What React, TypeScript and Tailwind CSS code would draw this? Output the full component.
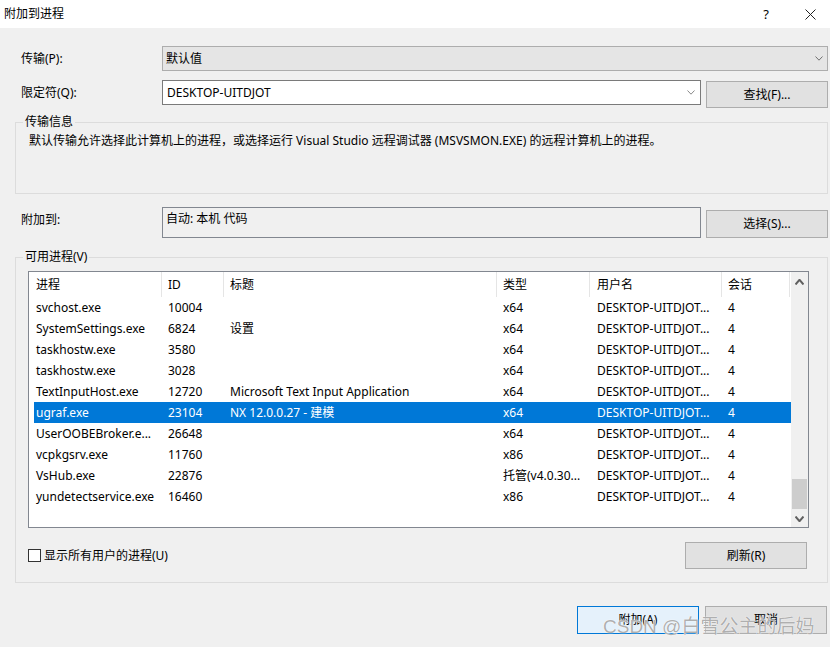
import React from "react";

const font = { fontFamily: '"Segoe UI", "Noto Sans", "Noto Sans CJK SC", sans-serif' };

type Row = [string, string, string, string, string, string];

const rows: Row[] = [
  ["svchost.exe", "10004", "", "x64", "DESKTOP-UITDJOT...", "4"],
  ["SystemSettings.exe", "6824", "设置", "x64", "DESKTOP-UITDJOT...", "4"],
  ["taskhostw.exe", "3580", "", "x64", "DESKTOP-UITDJOT...", "4"],
  ["taskhostw.exe", "3028", "", "x64", "DESKTOP-UITDJOT...", "4"],
  ["TextInputHost.exe", "12720", "Microsoft Text Input Application", "x64", "DESKTOP-UITDJOT...", "4"],
  ["ugraf.exe", "23104", "NX 12.0.0.27 - 建模", "x64", "DESKTOP-UITDJOT...", "4"],
  ["UserOOBEBroker.e...", "26648", "", "x64", "DESKTOP-UITDJOT...", "4"],
  ["vcpkgsrv.exe", "11760", "", "x86", "DESKTOP-UITDJOT...", "4"],
  ["VsHub.exe", "22876", "", "托管(v4.0.30...", "DESKTOP-UITDJOT...", "4"],
  ["yundetectservice.exe", "16460", "", "x86", "DESKTOP-UITDJOT...", "4"],
];

const headers = ["进程", "ID", "标题", "类型", "用户名", "会话"];
// column widths in px, first column has a tighter left padding
const colClass = [
  "w-[128px] pl-[2px]",
  "w-[62px] pl-[6px]",
  "w-[273px] pl-[6px]",
  "w-[93px] pl-[6px]",
  "w-[132px] pl-[7px]",
  "w-[68px] pl-[6px]",
];

function Chevron({ up = false, color = "#606060", w = 8, h = 5, sw = 1 }: { up?: boolean; color?: string; w?: number; h?: number; sw?: number }) {
  return (
    <svg width={w} height={h} viewBox={`0 0 ${w} ${h}`} fill="none">
      <polyline
        points={up ? `0.5,${h - 0.5} ${w / 2},0.8 ${w - 0.5},${h - 0.5}` : `0.5,0.5 ${w / 2},${h - 0.8} ${w - 0.5},0.5`}
        stroke={color}
        strokeWidth={sw}
      />
    </svg>
  );
}

function Button({ children, primary = false, className = "" }: { children: React.ReactNode; primary?: boolean; className?: string }) {
  return (
    <div
      className={`flex items-center justify-center text-[12px] text-black border ${
        primary ? "bg-[#e5f1fb] border-[#0078d7]" : "bg-[#e1e1e1] border-[#adadad]"
      } ${className}`}
    >
      {children}
    </div>
  );
}

export default function App() {
  return (
    <div className="relative w-[830px] h-[647px] overflow-hidden bg-[#f0f0f0] text-black text-[12px] leading-[16px]" style={font}>
      {/* title bar */}
      <header className="h-[28px] bg-white flex items-center justify-between pl-[4px] pr-[14px]">
        <span className="text-[12px]">附加到进程</span>
        <div className="flex items-center gap-[36px]">
          <span className="text-[13px]">?</span>
          <svg width="11" height="11" viewBox="0 0 11 11">
            <path d="M0.5 0.5 L10.5 10.5 M10.5 0.5 L0.5 10.5" stroke="#222" strokeWidth="1" />
          </svg>
        </div>
      </header>

      <div className="pl-[15px] pr-[2px]">
        {/* 传输 */}
        <div className="mt-[18px] flex items-center h-[25px]">
          <span className="w-[147px] pl-[6px]">传输(P):</span>
          <div className="flex-1 h-[25px] bg-[#e5e5e5] border border-[#adadad] flex items-center justify-between pl-[3px] pr-[4px]">
            <span>默认值</span>
            <Chevron color="#707070" w={8} h={5} />
          </div>
        </div>

        {/* 限定符 */}
        <div className="mt-[9px] flex items-start h-[28px]">
          <span className="w-[147px] pl-[6px] mt-[5px]">限定符(Q):</span>
          <div className="w-[539px] h-[25px] bg-white border border-[#7a7a7a] flex items-center justify-between pl-[4px] pr-[5px]">
            <span>DESKTOP-UITDJOT</span>
            <Chevron color="#8a8a8a" w={8} h={5} />
          </div>
          <Button className="ml-[5px] mt-[1px] w-[122px] h-[27px]">查找(F)...</Button>
        </div>

        {/* 传输信息 */}
        <fieldset className="mt-[6px] h-[80px] border border-[#dcdcdc]">
          <legend className="ml-[7px] px-[2px] leading-[16px]">传输信息</legend>
          <p className="pl-[13px] mt-[3px]">
            默认传输允许选择此计算机上的进程，或选择运行 Visual Studio 远程调试器 (MSVSMON.EXE) 的远程计算机上的进程。
          </p>
        </fieldset>

        {/* 附加到 */}
        <div className="mt-[13px] flex items-start">
          <span className="w-[147px] pl-[6px] mt-[5px]">附加到:</span>
          <div className="w-[539px] h-[31px] border border-[#828790] pl-[3px] pt-[3px]">自动: 本机 代码</div>
          <Button className="ml-[5px] mt-[3px] w-[122px] h-[28px]">选择(S)...</Button>
        </div>

        {/* 可用进程 */}
        <fieldset className="mt-[11px] h-[334px] border border-[#dcdcdc]">
          <legend className="ml-[7px] px-[2px] leading-[16px]">可用进程(V)</legend>

          <div className="mt-[6px] ml-[12px] w-[781px] h-[257px] bg-white border border-[#828790] flex">
            <div className="flex-1 pl-[5px]">
              <div className="flex h-[25px]">
                {headers.map((h, i) => (
                  <div key={h} className={`${colClass[i]} flex items-center border-r border-[#e5e5e5] pt-[1px]`}>
                    {h}
                  </div>
                ))}
              </div>
              {rows.map((r, ri) => (
                <div
                  key={ri}
                  className={`flex h-[21px] items-center ${ri === 5 ? "bg-[#0078d7] text-white" : ""}`}
                >
                  {r.map((c, ci) => (
                    <div key={ci} className={`${colClass[ci]} whitespace-nowrap overflow-hidden`}>
                      {c}
                    </div>
                  ))}
                </div>
              ))}
            </div>

            {/* scrollbar */}
            <div className="w-[17px] bg-[#f0f0f0] flex flex-col items-center">
              <div className="h-[17px] flex items-center justify-center mt-[1px]">
                <Chevron up sw={2} w={9} h={6} />
              </div>
              <div className="flex-1 w-full flex flex-col justify-end pb-[1px]">
                <div className="mx-[1px] h-[30px] bg-[#cdcdcd]" />
              </div>
              <div className="h-[17px] flex items-center justify-center">
                <Chevron sw={2} w={9} h={6} />
              </div>
            </div>
          </div>

          <div className="mt-[14px] flex items-center justify-between pl-[12px] pr-[20px]">
            <label className="flex items-center">
              <span className="w-[13px] h-[13px] border border-[#333] bg-white" />
              <span className="ml-[3px]">显示所有用户的进程(U)</span>
            </label>
            <Button className="w-[122px] h-[27px]">刷新(R)</Button>
          </div>
        </fieldset>

        {/* dialog buttons */}
        <div className="mt-[23px] flex justify-end gap-[6px] pr-[1px]">
          <Button primary className="w-[122px] h-[28px]">附加(A)</Button>
          <Button className="w-[122px] h-[28px]">取消</Button>
        </div>
      </div>

      {/* watermark */}
      <div
        className="absolute left-[603px] top-[614px] text-[19px] leading-[26px] text-[#8c8c8c]/70 whitespace-nowrap"
        style={{ fontFamily: '"Liberation Sans", "Noto Sans CJK SC", sans-serif', textShadow: "0 0 1px #fff, 0 0 1px #fff" }}
      >
        CSDN @白雪公主的后妈
      </div>
    </div>
  );
}
